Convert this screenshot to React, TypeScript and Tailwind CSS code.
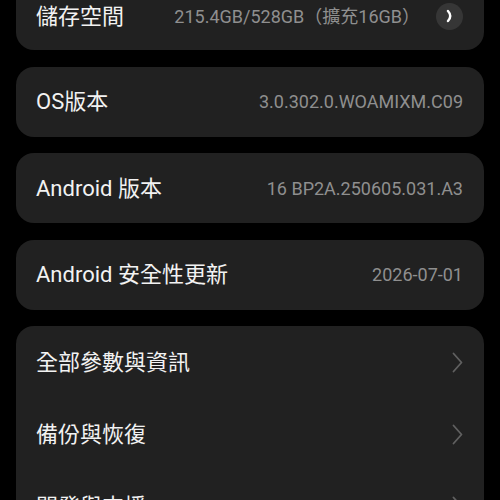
const font = { fontFamily: 'Roboto, "Noto Sans CJK TC", sans-serif' };

function Chevron() {
  return (
    <svg width="11" height="21" viewBox="0 0 11 21" fill="none" className="text-[#606060]">
      <polyline points="1.5,1.5 9.5,10.5 1.5,19.5" stroke="currentColor" strokeWidth="1.8" strokeLinecap="round" strokeLinejoin="round" />
    </svg>
  );
}

function InfoRow({ label, value }: { label: string; value: string }) {
  return (
    <div className="flex h-[70px] items-center justify-between rounded-[18px] bg-[#212121] pl-5 pr-[21px]">
      <span className="text-[22px] text-[#f2f2f2]">{label}</span>
      <span className="text-[18px] text-[#8f8f8f]">{value}</span>
    </div>
  );
}

const links = ['全部參數與資訊', '備份與恢復', '開發與支援'];

export default function App() {
  return (
    <div className="h-[500px] w-[500px] overflow-hidden bg-black px-4" style={font}>
      <div className="-mt-[18px] flex flex-col gap-[16.5px]">
        <div className="flex h-[68px] items-center justify-between rounded-[18px] bg-[#212121] pl-5 pr-[21px]">
          <span className="text-[22px] text-[#f2f2f2]">儲存空間</span>
          <div className="flex items-center gap-[16px]">
            <span className="text-[18px] text-[#8f8f8f]">215.4GB/528GB（擴充16GB）</span>
            <span className="flex h-[27px] w-[27px] items-center justify-center rounded-full bg-[#363636]">
              <svg width="8" height="14" viewBox="0 0 8 14" fill="none">
                <path d="M2 2 Q6.5 7 2 12" stroke="white" strokeWidth="2.4" strokeLinecap="round" />
              </svg>
            </span>
          </div>
        </div>
        <InfoRow label="OS版本" value="3.0.302.0.WOAMIXM.C09" />
        <InfoRow label="Android 版本" value="16 BP2A.250605.031.A3" />
        <InfoRow label="Android 安全性更新" value="2026-07-01" />
        <div className="rounded-[18px] bg-[#212121]">
          {links.map((l) => (
            <div key={l} className="flex h-[72px] items-center justify-between pl-5 pr-[21px]">
              <span className="text-[22px] text-[#f2f2f2]">{l}</span>
              <Chevron />
            </div>
          ))}
        </div>
      </div>
    </div>
  );
}
